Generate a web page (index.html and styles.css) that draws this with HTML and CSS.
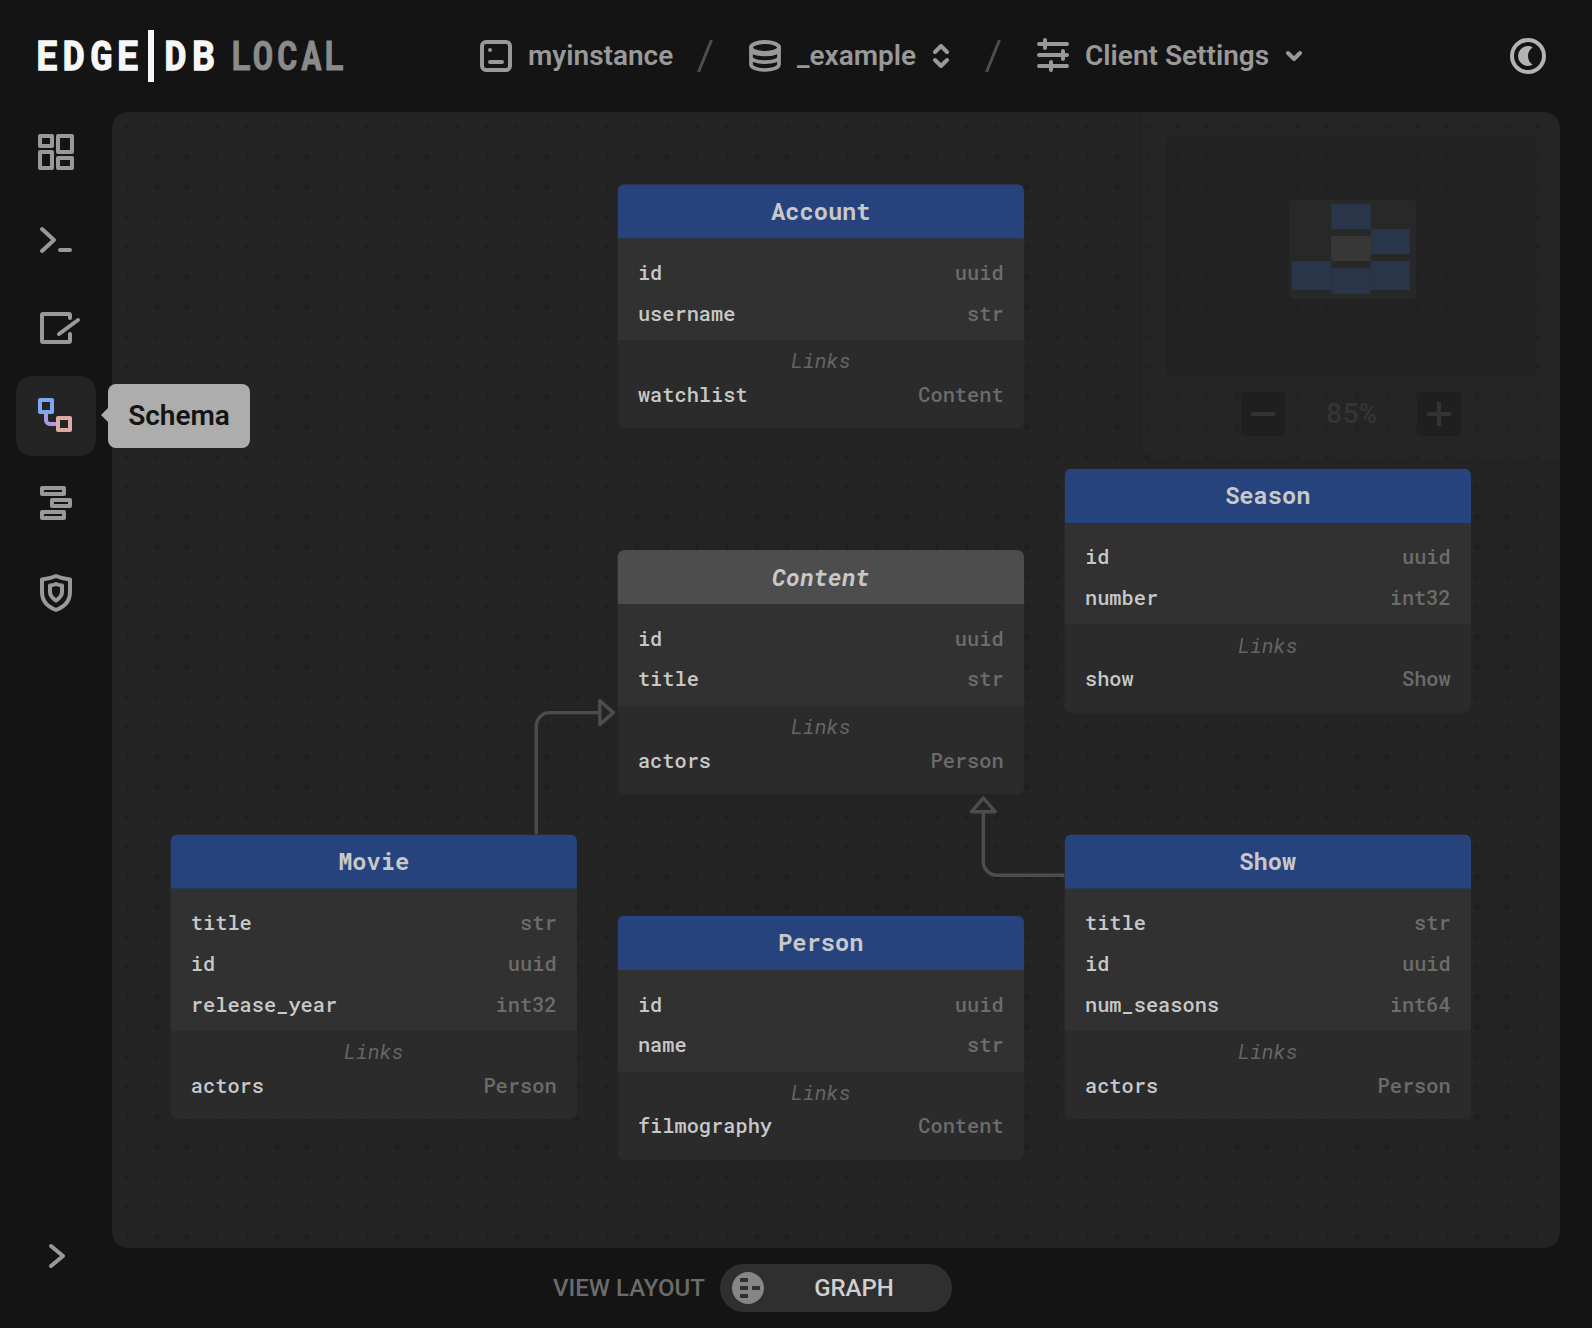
FILE: index.html
```html
<!DOCTYPE html>
<html lang="en">
<head>
<meta charset="utf-8">
<title>myinstance / _example – EdgeDB Local</title>
<link rel="stylesheet" href="styles.css">
</head>
<body>
<div class="app">
  <header class="topbar">
    <svg class="logo" width="328" height="64" viewBox="0 0 328 64" aria-label="EdgeDB Local">
      <g class="logo-main" transform="scale(.9 1)">
        <text y="46" x="25.700 55.200 86 115.500">EDGE</text>
        <text y="46" x="168.300 199">DB</text>
      </g>
      <rect x="124" y="6" width="6" height="52" fill="#f7f7f7"/>
      <g class="logo-sub" transform="scale(.84 1)">
        <text y="46" x="259 284.500 313.500 342 369.500">LOCAL</text>
      </g>
    </svg>
    <nav class="crumbs">
      <div class="crumb instance">
        <svg class="line" width="32" height="32" viewBox="0 0 32 32"><rect x="2" y="2" width="28" height="28" rx="4"/><path d="M10 10h.01M10 22h12"/></svg>
        <span class="crumb-text">myinstance</span>
      </div>
      <svg class="slash" width="16" height="32" viewBox="0 0 16 32"><path d="M1.5 32 14.5 0"/></svg>
      <div class="crumb database">
        <svg class="line" width="32" height="32" viewBox="0 0 32 32"><ellipse cx="16" cy="7.500" rx="14" ry="5.500"/><path d="M2 7.500v17C2 27.500 8.300 30 16 30s14-2.500 14-5.500v-17M2 10C3 13 9 14.500 16 14.500s13-1.500 14-4.500M2 17.500C3 20.500 9 22.200 16 22.200s13-1.700 14-4.700" stroke-width="3.700"/></svg>
        <span class="crumb-text">_example</span>
        <svg class="line arrows" width="16" height="24" viewBox="0 0 16 24"><path d="M2 8l6-6 6 6M2 16l6 6 6-6"/></svg>
      </div>
      <svg class="slash second" width="16" height="32" viewBox="0 0 16 32"><path d="M1.500 32 14.500 0"/></svg>
      <div class="crumb settings">
        <svg class="line sliders" width="32" height="36" viewBox="0 0 32 36"><path d="M2 7h28M2 18h28M2 29h28M8 3v8M26 14v8M14 25v8"/></svg>
        <span class="crumb-text">Client Settings</span>
        <svg class="line arrows" width="16" height="12" viewBox="0 0 16 12"><path d="M2 3l6 6 6-6"/></svg>
      </div>
    </nav>
    <svg class="theme" width="36" height="36" viewBox="0 0 36 36"><circle cx="18" cy="18" r="16" fill="none" stroke="#b3b3b3" stroke-width="4"/><path d="M18 8a10 10 0 0 0 0 20c2 0 3.600-.6 4.600-1.400C20 25 18 22 18 18s2-7 4.600-8.600C21.600 8.600 20 8 18 8Z" fill="#b3b3b3"/></svg>
  </header>

  <div class="middle">
    <aside class="sidebar">
      <a class="tab"><svg class="line square" viewBox="0 0 80 80"><rect x="24" y="24" width="12" height="10"/><rect x="42" y="24" width="14" height="16"/><rect x="24" y="40" width="12" height="16"/><rect x="42" y="46" width="14" height="10"/></svg></a>
      <a class="tab"><svg class="line" viewBox="0 0 80 80"><path d="M26 29l12 11-12 11M44 50h10"/></svg></a>
      <a class="tab"><svg class="line" viewBox="0 0 80 80"><path d="M54 30v-3a1 1 0 0 0-1-1H27a1 1 0 0 0-1 1v26a1 1 0 0 0 1 1h26a1 1 0 0 0 1-1v-7M43 46l19-14"/></svg></a>
      <a class="tab active">
        <svg class="line square" viewBox="0 0 80 80"><path d="M30 38v6a4 4 0 0 0 4 4h6" stroke="#ae97e4" stroke-linecap="butt"/><rect x="24" y="24" width="12" height="12" stroke="#7fa6f4"/><rect x="42" y="42" width="12" height="12" stroke="#deaaa5"/></svg>
        <span class="tooltip">Schema</span>
      </a>
      <a class="tab"><svg class="line square" viewBox="0 0 80 80"><rect x="26" y="24" width="22" height="6"/><rect x="36" y="36" width="18" height="6"/><rect x="26" y="48" width="22" height="6"/></svg></a>
      <a class="tab"><svg class="line" viewBox="0 0 80 80"><path d="M40 24c4.500 2 9 3 14 3.500V40c0 9-6 15-14 18C32 55 26 49 26 40V27.500C31 27 35.500 26 40 24Z"/><path d="M40 32c2 .8 4 1.300 6 1.500V40c0 4-3 6.500-6 8.500-3-2-6-4.500-6-8.500v-6.500c2-.2 4-.7 6-1.500Z"/></svg></a>
      <a class="expand"><svg class="line" width="20" height="26" viewBox="0 0 20 26"><path d="M4 3l12 10L4 23"/></svg></a>
    </aside>

    <main class="panel">
      <svg class="dots" width="1448" height="1136"><defs><pattern id="cross" width="30" height="30" patternUnits="userSpaceOnUse"><path d="M12 15h6M15 12v6" stroke="#1d1d1d" stroke-width="1.600"/></pattern></defs><rect width="1448" height="1136" fill="url(#cross)"/></svg>

      <div class="graph">
        <svg class="links" width="1536" height="1200" viewBox="0 0 1536 1200">
          <path d="M432 768V640a16 16 0 0 1 16-16h59M507 610v28l16-14Z"/>
          <path d="M1056 816H976a16 16 0 0 1-16-16v-59M946 741h28l-14-16Z"/>
        </svg>
        <section class="node account">
          <h2>Account</h2>
          <dl class="props"><div><dt>id</dt><dd>uuid</dd></div><div><dt>username</dt><dd>str</dd></div></dl>
          <dl class="rels"><p>Links</p><div><dt>watchlist</dt><dd>Content</dd></div></dl>
        </section>
        <section class="node season">
          <h2>Season</h2>
          <dl class="props"><div><dt>id</dt><dd>uuid</dd></div><div><dt>number</dt><dd>int32</dd></div></dl>
          <dl class="rels"><p>Links</p><div><dt>show</dt><dd>Show</dd></div></dl>
        </section>
        <section class="node content abstract">
          <h2>Content</h2>
          <dl class="props"><div><dt>id</dt><dd>uuid</dd></div><div><dt>title</dt><dd>str</dd></div></dl>
          <dl class="rels"><p>Links</p><div><dt>actors</dt><dd>Person</dd></div></dl>
        </section>
        <section class="node movie">
          <h2>Movie</h2>
          <dl class="props"><div><dt>title</dt><dd>str</dd></div><div><dt>id</dt><dd>uuid</dd></div><div><dt>release_year</dt><dd>int32</dd></div></dl>
          <dl class="rels"><p>Links</p><div><dt>actors</dt><dd>Person</dd></div></dl>
        </section>
        <section class="node person">
          <h2>Person</h2>
          <dl class="props"><div><dt>id</dt><dd>uuid</dd></div><div><dt>name</dt><dd>str</dd></div></dl>
          <dl class="rels"><p>Links</p><div><dt>filmography</dt><dd>Content</dd></div></dl>
        </section>
        <section class="node show">
          <h2>Show</h2>
          <dl class="props"><div><dt>title</dt><dd>str</dd></div><div><dt>id</dt><dd>uuid</dd></div><div><dt>num_seasons</dt><dd>int64</dd></div></dl>
          <dl class="rels"><p>Links</p><div><dt>actors</dt><dd>Person</dd></div></dl>
        </section>
      </div>

      <div class="minimap">
        <svg class="map" width="370" height="240" viewBox="0 0 370 240">
          <rect x="123" y="63.700" width="127" height="99.600" rx="4" fill="#282828"/>
          <g fill="#293548">
            <rect x="165.200" y="68" width="39.500" height="25"/>
            <rect x="205" y="93" width="39" height="25"/>
            <rect x="126" y="125" width="39" height="29"/>
            <rect x="165.200" y="132.300" width="39.500" height="25.500"/>
            <rect x="205" y="125" width="39" height="29"/>
          </g>
          <rect x="165.200" y="100" width="39.500" height="25" fill="#373737"/>
        </svg>
        <div class="zoom">
          <button class="zoom-btn"><svg width="24" height="24"><path d="M0 12h24"/></svg></button>
          <span class="zoom-level">85%</span>
          <button class="zoom-btn"><svg width="24" height="24"><path d="M0 12h24M12 0v24"/></svg></button>
        </div>
      </div>
    </main>
  </div>

  <footer class="bottombar">
    <span class="label">VIEW LAYOUT</span>
    <div class="switch">
      <svg width="32" height="32" viewBox="0 0 32 32"><circle cx="16" cy="16" r="16" fill="#858585"/><path d="M8 8h8M8 16h8M8 24h8M20 16h8" stroke="#2f2f2f" stroke-width="4"/></svg>
      <span class="value">GRAPH</span>
    </div>
  </footer>
</div>
</body>
</html>
```
FILE: styles.css
```css
* { box-sizing: border-box; }

body {
  margin: 0;
  background: #141414;
  color: #999;
  font-family: Roboto, "Liberation Sans", sans-serif;
}

svg { display: block; flex: none; }

.app {
  width: 1592px;
  height: 1328px;
  display: grid;
  grid-template-rows: 112px 1136px 80px;
  overflow: hidden;
}

.line {
  fill: none;
  stroke: #999;
  stroke-width: 4;
  stroke-linecap: round;
  stroke-linejoin: round;
}

/* Top bar */
.topbar {
  display: flex;
  align-items: center;
  padding: 0 46px 0 24px;
}

.logo text {
  font: 700 40.5px "Roboto Mono", Roboto, "Liberation Sans", sans-serif;
  text-anchor: middle;
}
.logo-main { fill: #f7f7f7; stroke: #f7f7f7; stroke-width: 1.4; }
.logo-sub { fill: #8b8b8b; stroke: #8b8b8b; stroke-width: .8; }

.crumbs {
  display: flex;
  align-items: center;
  margin-left: 128px;
}

.crumb {
  display: flex;
  align-items: center;
  white-space: nowrap;
}

.crumb-text {
  margin-left: 16px;
  font-size: 28px;
  line-height: 32px;
  font-weight: 600;
}

.instance { width: 193px; }
.database { width: 200px; }
.settings { width: 265px; }
.sliders { margin-top: -2px; }
.arrows { margin-left: auto; }

.slash {
  margin: 0 36px 0 24px;
  fill: none;
  stroke: #4d4d4d;
  stroke-width: 3;
}
.slash.second { margin-left: 36px; }

.theme { margin-left: auto; }

/* Sidebar */
.middle {
  display: grid;
  grid-template-columns: 112px 1448px;
}

.sidebar {
  display: flex;
  flex-direction: column;
  gap: 8px;
  padding-left: 16px;
}

.tab {
  position: relative;
  width: 80px;
  height: 80px;
  border-radius: 16px;
}
.tab.active { background: #242424; z-index: 2; }

.expand {
  margin: auto 0 -21px 31px;
}

.tooltip {
  position: absolute;
  left: 92px;
  top: 8px;
  width: 142px;
  height: 64px;
  border-radius: 8px;
  background: #adadad;
  color: #141414;
  font-size: 28px;
  font-weight: 600;
  line-height: 63px;
  text-align: center;
}
.tooltip::before {
  content: "";
  position: absolute;
  left: -7px;
  top: 23px;
  border: solid transparent;
  border-width: 8px 8px 8px 0;
  border-right-color: #adadad;
}

/* Schema graph */
.panel {
  position: relative;
  background: #242424;
  border-radius: 16px;
  overflow: hidden;
}

.dots { position: absolute; inset: 0; }

.graph {
  position: absolute;
  left: 0;
  top: 0;
  transform: translate(58.500px, 72.300px) scale(.8467);
  transform-origin: 0 0;
}

.links {
  position: absolute;
  left: 0;
  top: 0;
  fill: none;
  stroke: #4d4d4d;
  stroke-width: 4;
  stroke-linejoin: round;
}

.node {
  position: absolute;
  width: 480px;
  border-radius: 8px;
  overflow: hidden;
  background: #2b2b2b;
  font-family: "Roboto Mono", "DejaVu Sans Mono", "Liberation Mono", monospace;
  font-size: 24px;
  font-weight: 500;
}
.account { left: 528px; top: 0; }
.season { left: 1056px; top: 336px; }
.content { left: 528px; top: 432px; }
.movie { left: 0; top: 768px; }
.person { left: 528px; top: 864px; }
.show { left: 1056px; top: 768px; }

.node h2 {
  margin: 0;
  height: 64px;
  background: #26437e;
  color: #c8c8c8;
  font-size: 28px;
  font-weight: 700;
  line-height: 64px;
  text-align: center;
}
.abstract h2 { background: #4d4d4d; font-style: italic; }

.node dl { margin: 0; }
.props { padding: 16px 24px 8px; background: #313131; }
.rels { padding: 8px 24px 16px; }

.node p {
  margin: 0;
  color: #656565;
  font-style: italic;
  font-weight: 400;
  line-height: 32px;
  height: 32px;
  text-align: center;
}

.node dl div {
  display: flex;
  justify-content: space-between;
  height: 48px;
  line-height: 48px;
}
.node dt { color: #c8c8c8; }
.node dd { margin: 0; color: #6c6c6c; }

/* Minimap */
.minimap {
  position: absolute;
  top: 0;
  right: 0;
  width: 418px;
  height: 348px;
  padding: 24px;
  border-radius: 0 0 0 16px;
  background: rgba(40, 40, 40, .25);
  box-shadow: 0 0 4px rgba(0, 0, 0, .08);
}

.map {
  background: rgba(30, 30, 30, .45);
  border-radius: 4px;
}

.zoom {
  display: flex;
  align-items: center;
  justify-content: center;
  gap: 40px;
  margin: 16px 0 0 0;
}

.zoom-btn {
  display: grid;
  place-items: center;
  width: 44px;
  height: 44px;
  padding: 0;
  border: 0;
  border-radius: 4px;
  background: #1f1f1f;
}
.zoom-btn path { stroke: #333; stroke-width: 4; }

.zoom-level {
  width: 52px;
  padding: 0 0 3px;
  color: #353535;
  font: 500 28px "Roboto Mono", "DejaVu Sans Mono", monospace;
  text-align: center;
}

/* Bottom bar */
.bottombar {
  display: flex;
  align-items: center;
  padding-left: 553px;
  font-size: 24px;
}

.label {
  width: 167px;
  color: #6b6b6b;
  font-weight: 500;
}

.switch {
  display: flex;
  align-items: center;
  width: 232px;
  height: 48px;
  padding-left: 12px;
  border-radius: 24px;
  background: #2f2f2f;
}

.value {
  width: 180px;
  color: #d0d0d0;
  font-weight: 500;
  text-align: center;
}
```
